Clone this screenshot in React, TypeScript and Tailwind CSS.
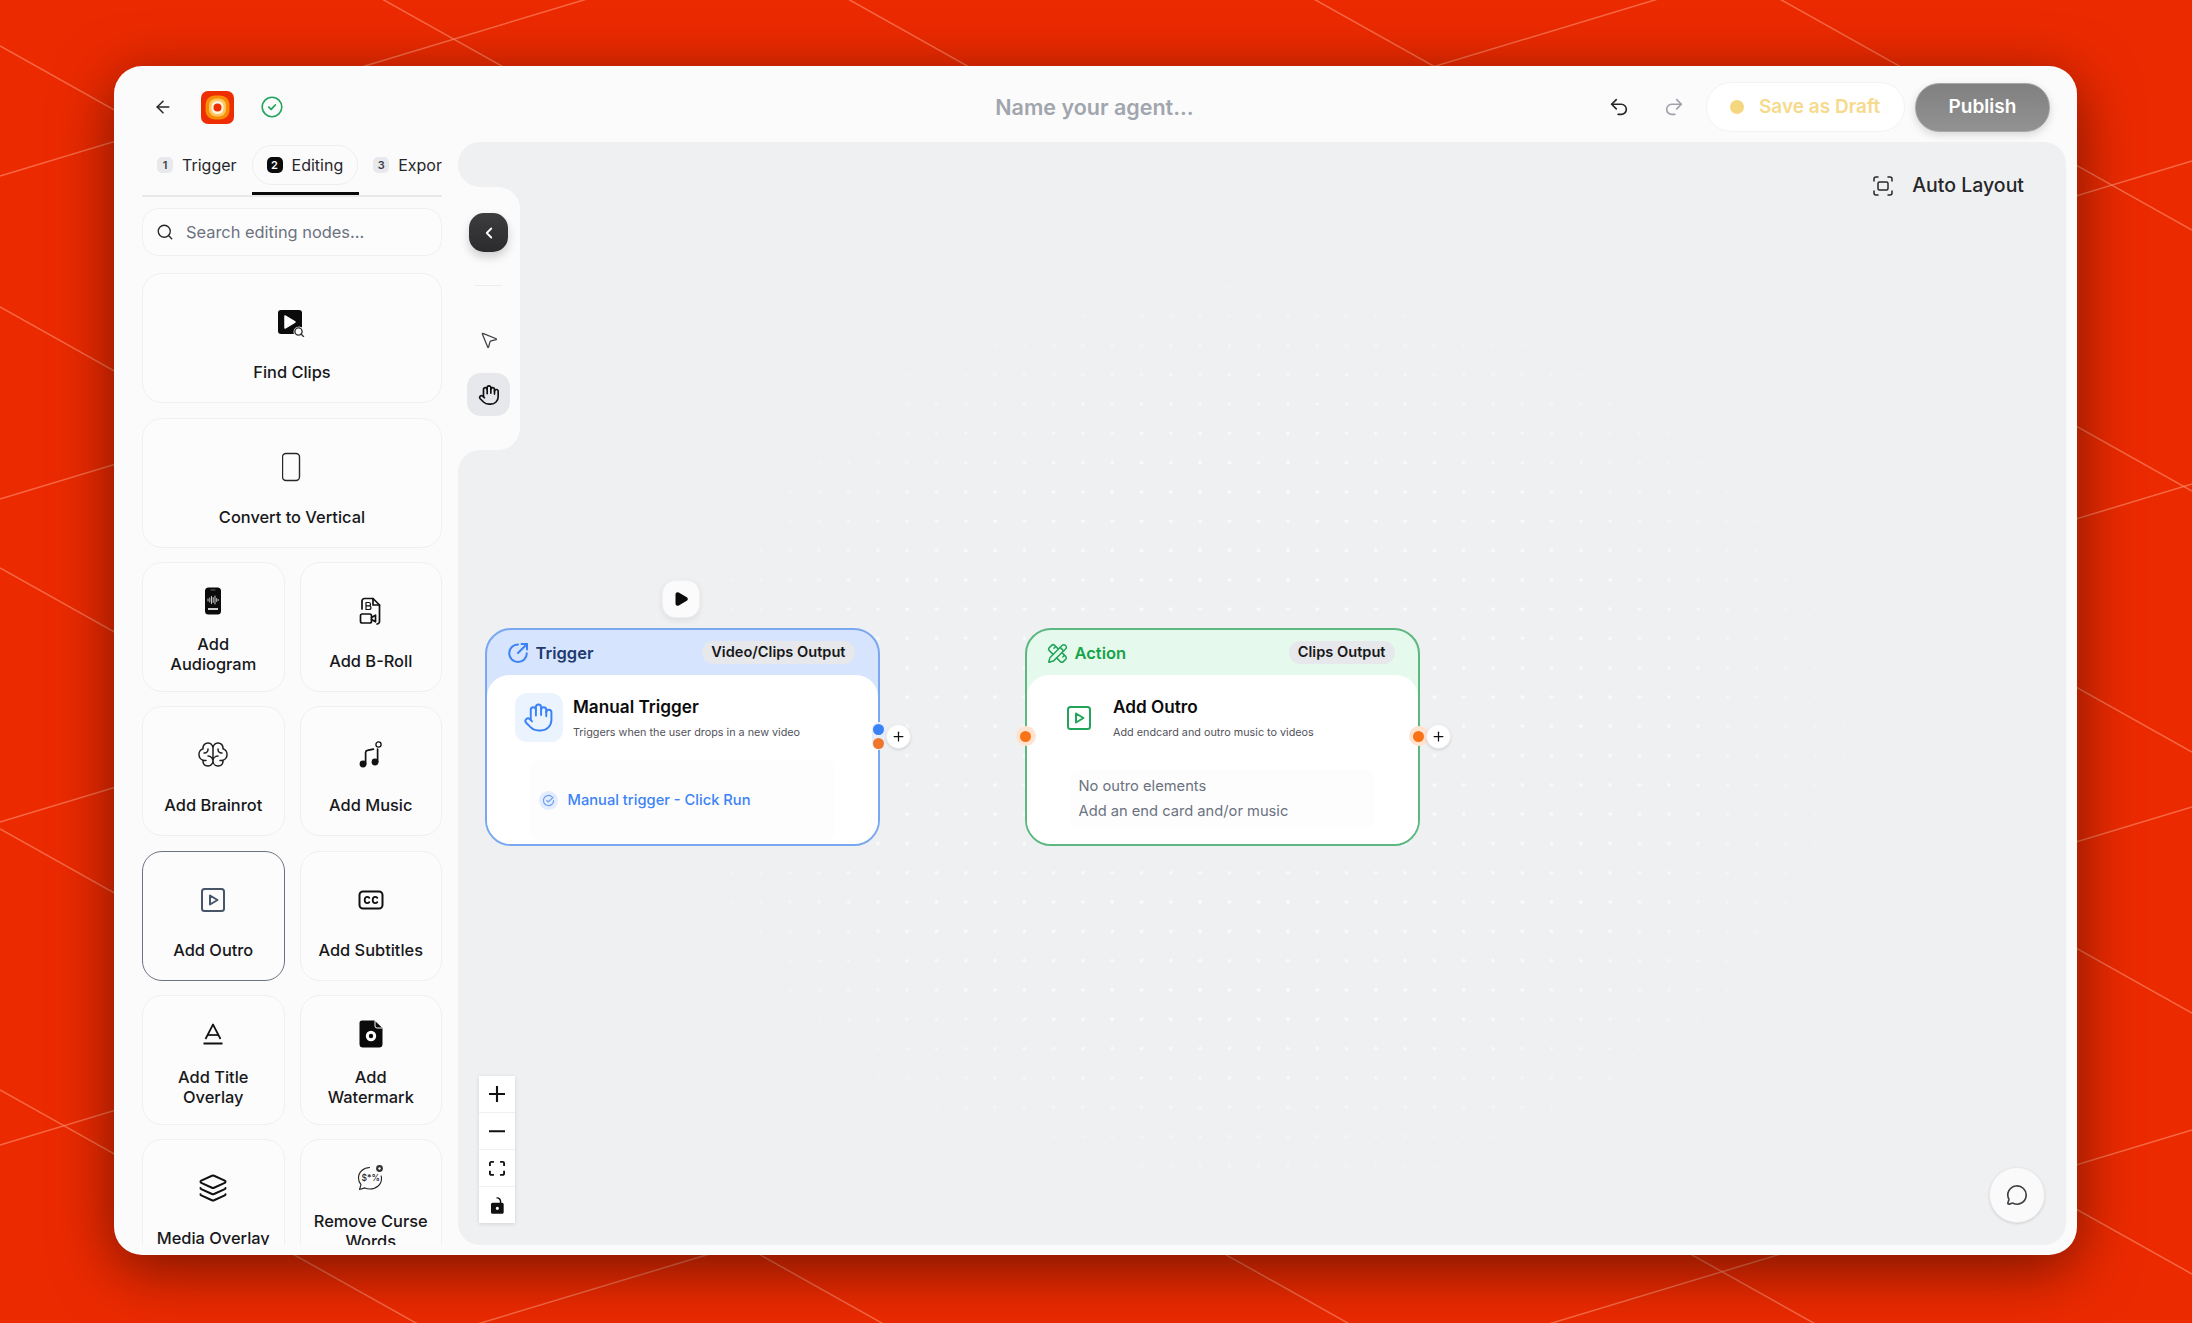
import React from "react";
import {
  ArrowLeft,
  ChevronLeft,
  Hand,
  Layers,
  MessageCircle,
  MousePointer2,
  PencilRuler,
  Play,
  Plus,
  Redo2,
  Search,
  Undo2,
} from "lucide-react";
import { PiBrainLight } from "react-icons/pi";

const FindClipsIcon = () => (
  <svg width="30" height="30" viewBox="2 -1 30 30">
    <rect x="3" y="2" width="24" height="24" rx="3" fill="#0b0b0c" />
    <path d="M10 8v12l10-6z" fill="#fff" stroke="#fff" strokeWidth="1.5" strokeLinejoin="round" />
    <circle cx="24" cy="24" r="5.5" fill="#fbfbfc" />
    <circle cx="23.5" cy="23.5" r="3.6" fill="none" stroke="#333" strokeWidth="1.4" />
    <path d="M26 26l2.5 2.5" stroke="#333" strokeWidth="1.4" strokeLinecap="round" />
  </svg>
);

const PhoneIcon = () => (
  <svg width="20" height="30" viewBox="1 0 20 30" fill="none" stroke="#27272a" strokeWidth="1.4">
    <rect x="1.5" y="1.5" width="17" height="27" rx="3.5" />
  </svg>
);

const AudiogramIcon = () => (
  <svg width="30" height="30" viewBox="0 0 30 30">
    <rect x="7" y="1.5" width="16" height="27" rx="3.5" fill="#0b0b0c" />
    <path d="M13 4h4" stroke="#666" strokeWidth="1" strokeLinecap="round" />
    <path
      d="M10 13v2M11.8 12v4M13.5 10.5v7M15.2 11.5v5M17 10v8M18.7 12.5v3M20.2 13.5v1"
      stroke="#ddd"
      strokeWidth="0.9"
      strokeLinecap="round"
    />
    <path d="M10 23h10" stroke="#fff" strokeWidth="1.6" />
  </svg>
);

const BRollIcon = () => (
  <svg width="30" height="30" viewBox="0 0 30 30" fill="none" stroke="#111" strokeWidth="1.7" strokeLinecap="round" strokeLinejoin="round">
    <path d="M6 13V5a2.5 2.5 0 012.5-2.5H17l6.5 6.5v16.5a2.5 2.5 0 01-2.5 2.5" />
    <path d="M17 2.5V9h6.5" />
    <path d="M10 6.5h2.8a1.6 1.6 0 010 3.4H10h3.2a1.7 1.7 0 010 3.6H10z" strokeWidth="1.2" />
    <rect x="4.5" y="18" width="11" height="9" rx="1.8" />
    <path d="M15.5 21.5l4-2.3v6.6l-4-2.3" />
  </svg>
);

const MusicIcon = () => (
  <svg width="30" height="30" viewBox="0 0 30 30" fill="none" stroke="#111" strokeWidth="1.7" strokeLinecap="round">
    <circle cx="7" cy="24" r="3.4" fill="#111" stroke="none" />
    <circle cx="19" cy="22" r="3.4" fill="#111" stroke="none" />
    <path d="M9.6 24V12.5c0-1.2.7-1.9 1.8-2.1l6-1.3" />
    <path d="M21.6 22V9" />
    <circle cx="22.5" cy="4.5" r="2.6" strokeWidth="1.3" />
  </svg>
);

const OutroIcon = ({ color, size = 24 }: { color: string; size?: number }) => (
  <svg width={size} height={size} viewBox="0 0 24 24" fill="none" stroke={color} strokeWidth="2" strokeLinejoin="round">
    <rect x="1" y="1" width="22" height="22" rx="2.5" />
    <path d="M9 7.5v9l7.5-4.5z" />
  </svg>
);

const CcIcon = () => (
  <svg width="26" height="20" viewBox="0 0 26 20" fill="none" stroke="#111" strokeWidth="2" strokeLinecap="round">
    <rect x="1.5" y="1.5" width="23" height="17" rx="3.5" />
    <path d="M11.3 7.8c-.6-.7-1.3-1-2-1-1.500 0-2.600 1.300-2.600 3.200s1.100 3.200 2.600 3.200c.7 0 1.400-.3 2-1" strokeWidth="1.8" />
    <path d="M19.300 7.800c-.6-.7-1.300-1-2-1-1.500 0-2.600 1.300-2.600 3.200s1.100 3.200 2.600 3.200c.7 0 1.400-.3 2-1" strokeWidth="1.8" />
  </svg>
);

const TitleIcon = () => (
  <svg width="24" height="24" viewBox="0 0 24 24" fill="none" stroke="#111" strokeWidth="1.7" strokeLinejoin="round">
    <path d="M4.5 17L12 2.5 19.5 17" />
    <path d="M6.8 13h10.4" />
    <path d="M2.500 21.500h19" strokeWidth="2" />
  </svg>
);

const WatermarkIcon = () => (
  <svg width="30" height="30" viewBox="0 0 30 30">
    <path d="M6 1.500h12.500L26.500 9v16a3.500 3.500 0 01-3.500 3.500H7A3.500 3.500 0 013.500 25V4A2.500 2.500 0 016 1.500z" fill="#0b0b0c" />
    <path d="M19 1.500v5.500a2 2 0 002 2h5.500" fill="none" stroke="#fbfbfc" strokeWidth="1" />
    <circle cx="15" cy="17" r="5.200" fill="#fff" />
    <circle cx="15" cy="17" r="2.200" fill="#0b0b0c" />
  </svg>
);

const CurseIcon = () => (
  <svg width="30" height="30" viewBox="0 0 30 30" fill="none" stroke="#222" strokeWidth="1.100">
    <path d="M14 4.500C7.500 4.500 2.500 9 2.500 15c0 2.600.9 4.900 2.500 6.700L3.500 26.500l5.300-1.600c1.600.7 3.300 1.100 5.200 1.100 6.500 0 11.500-4.500 11.500-10.500 0-1-.2-2-.4-2.900" strokeLinejoin="round" />
    <circle cx="23.500" cy="5.500" r="3.400" fill="#333" stroke="none" />
    <circle cx="23.500" cy="5.500" r="1.200" fill="#fff" stroke="none" />
    <text x="5.500" y="18" fontFamily="Inter, sans-serif" fontSize="8.500" fontWeight="500" fill="#222" stroke="none">
      $*%
    </text>
  </svg>
);

const TriggerIcon = () => (
  <svg width="22" height="22" viewBox="0 0 22 22" fill="none" stroke="#3b82f6" strokeWidth="2" strokeLinecap="round" strokeLinejoin="round">
    <path d="M11 2.500a8.800 8.800 0 108.800 8.800" />
    <path d="M11 11l9-9" />
    <path d="M14.500 2h5.500v5.500" />
  </svg>
);

const AutoLayoutIcon = () => (
  <svg width="22" height="22" viewBox="0 0 22 22" fill="none" stroke="#27272a" strokeWidth="1.500" strokeLinecap="round">
    <path d="M2 6V4a2 2 0 012-2h2M16 2h2a2 2 0 012 2v2M20 16v2a2 2 0 01-2 2h-2M6 20H4a2 2 0 01-2-2v-2" />
    <rect x="6" y="7" width="10" height="8" rx="1.500" />
  </svg>
);

const Logo = () => (
  <svg width="33" height="33" viewBox="0 0 33 33">
    <rect width="33" height="33" rx="7" fill="#ee2d02" />
    <rect x="4.500" y="4.500" width="24" height="24" rx="9" fill="#f98b06" />
    <rect x="8" y="7.500" width="17" height="18" rx="7" fill="#fdc65e" />
    <rect x="10.500" y="10" width="12" height="13" rx="5.500" fill="#fff5dc" />
    <circle cx="16.500" cy="16.500" r="4" fill="#ee2d02" />
  </svg>
);

const SavedIcon = () => (
  <svg width="22" height="22" viewBox="0 0 22 22" fill="none" stroke="#22a55b" strokeLinecap="round" strokeLinejoin="round">
    <circle cx="11" cy="11" r="9.800" strokeWidth="1.600" />
    <path d="M7.800 11.200l2.300 2.200 4.200-4.400" strokeWidth="1.800" />
  </svg>
);

const cards = [
  { label: "Add\nAudiogram", two: true, icon: <AudiogramIcon /> },
  { label: "Add B-Roll", two: false, icon: <BRollIcon /> },
  { label: "Add Brainrot", two: false, icon: <PiBrainLight size={32} color="#1f1f22" /> },
  { label: "Add Music", two: false, icon: <MusicIcon /> },
  { label: "Add Outro", two: false, selected: true, icon: <OutroIcon color="#475569" /> },
  { label: "Add Subtitles", two: false, icon: <CcIcon /> },
  { label: "Add Title\nOverlay", two: true, icon: <TitleIcon /> },
  { label: "Add\nWatermark", two: true, icon: <WatermarkIcon /> },
  { label: "Media Overlay", two: false, icon: <Layers size={30} strokeWidth={1.600} color="#111" /> },
  { label: "Remove Curse\nWords", two: true, icon: <CurseIcon /> },
];

const NodeCard = ({
  label,
  icon,
  two,
  selected,
}: {
  label: string;
  icon: React.ReactNode;
  two?: boolean;
  selected?: boolean;
}) => (
  <div
    className={`flex h-[130px] shrink-0 flex-col items-center rounded-[20px] border-[1.5px] bg-[#fcfcfc] text-center ${
      two ? "gap-[13px] pt-[18px]" : "gap-[20px] pt-[28px]"
    } ${selected ? "border-[#6b7280]" : "border-[#f0f0f2]"}`}
  >
    <div className="flex h-[40px] shrink-0 items-center justify-center">{icon}</div>
    <div className="text-[16.400px] leading-[20.300px] font-medium whitespace-pre-line text-[#18181b]">{label}</div>
  </div>
);

const Tab = ({ n, label, active }: { n: number; label: string; active?: boolean }) => (
  <div className={`flex h-[40px] shrink-0 items-center gap-[9px] rounded-[20px] ${active ? "border-[1.5px] border-[#eeeef0] px-[14px]" : "px-[15px]"}`}>
    <span
      className={`flex h-[16px] w-[16px] items-center justify-center rounded-[5px] text-[11px] font-semibold ${
        active ? "bg-[#0b0b0c] text-white" : "bg-[#e8e9ec] text-[#3f3f46]"
      }`}
    >
      {n}
    </span>
    <span className="text-[16px] text-[#27272a]">{label}</span>
  </div>
);

const Handle = ({ className }: { className: string }) => (
  <div className={`absolute flex h-[20px] w-[20px] items-center justify-center rounded-full bg-[#ffe2cf] ${className}`}>
    <div className="h-[11px] w-[11px] rounded-full bg-[#f97316]" />
  </div>
);

const AddButton = ({ className }: { className: string }) => (
  <div className={`absolute flex h-[25px] w-[25px] items-center justify-center rounded-full border border-[#eeeef0] bg-white shadow-sm ${className}`}>
    <Plus size={15} color="#111" strokeWidth={2} />
  </div>
);

const FlowNode = ({
  borderClass,
  headClass,
  icon,
  kind,
  kindClass,
  output,
  children,
  handles,
}: {
  borderClass: string;
  headClass: string;
  icon: React.ReactNode;
  kind: string;
  kindClass: string;
  output: string;
  children: React.ReactNode;
  handles: React.ReactNode;
}) => (
  <div className={`relative h-[218px] w-[395px] rounded-[26px] border-[2px] ${borderClass} ${headClass}`}>
    <div className="flex h-[45px] items-center justify-between pr-[23px] pl-[20px]">
      <div className="mt-[1px] flex items-center gap-[7px]">
        {icon}
        <span className={`text-[16.500px] font-semibold ${kindClass}`}>{kind}</span>
      </div>
      <span className="rounded-full bg-[#e6e8ec] px-[9px] text-[14.600px] leading-[23px] font-semibold text-[#18181b]">{output}</span>
    </div>
    <div className="h-[169px] rounded-t-[22px] rounded-b-[24px] bg-white pt-[18px] pr-[28px] pl-[28px]">{children}</div>
    {handles}
  </div>
);

const linesA = [-5, -4, -3, -2, -1, 0, 1, 2, 3, 4];
const linesB = [0, 1, 2, 3, 4, 5, 6];

const App = () => {
  return (
    <div className="relative h-[1323px] w-full overflow-hidden bg-[#ec2a00] pt-[66px] pl-[114px] font-['Inter',sans-serif]">
      <svg className="absolute inset-0" width="2192" height="1323" fill="none" stroke="#ff8a6b" strokeOpacity="0.65" strokeWidth="1.5">
        {linesA.map((k) => (
          <line key={`a${k}`} x1="0" y1={46 + 261 * k} x2="2192" y2={46 + 261 * k + 1228} />
        ))}
        {linesB.map((k) => (
          <line key={`b${k}`} x1="0" y1={176 + 323 * k} x2="2192" y2={176 + 323 * k - 661} />
        ))}
      </svg>

      <div className="relative flex h-[1189px] w-[1963px] flex-col rounded-[28px] bg-[#fbfbfc] shadow-[0_14px_60px_rgba(0,0,0,0.5)]">
        {/* top bar */}
        <div className="grid h-[76px] shrink-0 grid-cols-[1fr_auto_1fr] items-center pt-[6px] pr-[27px] pl-[39px]">
          <div className="flex items-center">
            <ArrowLeft size={20} color="#27272a" strokeWidth={1.800} />
            <div className="ml-[28px] flex">
              <Logo />
            </div>
            <div className="ml-[27px] flex">
              <SavedIcon />
            </div>
          </div>
          <div className="mr-[14px] text-[21.500px] font-semibold text-[#a1a5ad]">Name your agent...</div>
          <div className="flex items-center justify-end">
            <Undo2 size={22} color="#27272a" strokeWidth={1.800} />
            <Redo2 size={22} color="#a1a1aa" strokeWidth={1.800} className="ml-[33px]" />
            <div className="ml-[21px] flex h-[50px] w-[199px] items-center gap-[15px] rounded-full border border-[#f3f3f4] bg-white pl-[23px]">
              <div className="h-[14px] w-[14px] rounded-full bg-[#f5d77f]" />
              <span className="text-[19px] font-semibold text-[#f6da8c]">Save as Draft</span>
            </div>
            <div className="ml-[10px] flex h-[49px] w-[135px] items-center justify-center rounded-[24px] border border-[#a8a8a8] bg-[linear-gradient(180deg,#808080,#929292)] text-[19px] font-semibold text-white shadow-[0_3px_8px_rgba(0,0,0,0.15)]">
              Publish
            </div>
          </div>
        </div>

        <div className="flex min-h-0 flex-1 gap-[16px] pr-[11px] pb-[10px] pl-[28px]">
          {/* node library */}
          <div className="flex w-[300px] shrink-0 flex-col overflow-hidden">
            <div className="relative mt-[3px] flex h-[52px] shrink-0 items-start overflow-hidden border-b-[2px] border-[#e9e9ec]">
              <Tab n={1} label="Trigger" />
              <Tab n={2} label="Editing" active />
              <Tab n={3} label="Export" />
              <div className="absolute bottom-0 left-[110px] h-[3px] w-[107px] bg-[#0b0b0c]" />
            </div>
            <div className="mt-[11px] flex h-[48px] shrink-0 items-center gap-[12px] rounded-[16px] border-[1.5px] border-[#f0f0f2] bg-[#fcfcfc] pl-[13px]">
              <Search size={18} color="#27272a" strokeWidth={1.800} />
              <span className="text-[16.400px] text-[#6b7280]">Search editing nodes...</span>
            </div>
            <div className="mt-[17px] flex flex-col gap-[14.500px]">
              <NodeCard label="Find Clips" icon={<FindClipsIcon />} />
              <NodeCard label="Convert to Vertical" icon={<PhoneIcon />} />
              <div className="grid grid-cols-2 gap-x-[15px] gap-y-[14.300px]">
                {cards.map((c) => (
                  <NodeCard key={c.label} label={c.label} icon={c.icon} two={c.two} selected={c.selected} />
                ))}
              </div>
            </div>
          </div>

          {/* canvas */}
          <div className="relative min-w-0 flex-1 overflow-hidden rounded-[22px] bg-[#eff0f2]">
            <div className="absolute inset-0 bg-[radial-gradient(circle,#f8f9fa_1.6px,transparent_2px)] bg-[size:29.300px_29.300px] bg-[position:-5px_13px] [mask-image:radial-gradient(ellipse_640px_500px_at_800px_600px,black_60%,transparent_100%)]" />

            {/* side tools */}
            <div className="absolute top-[23px] left-0 h-[22px] w-[22px] bg-[#fbfbfc]">
              <div className="h-full w-full rounded-bl-[22px] bg-[#eff0f2]" />
            </div>
            <div className="absolute top-[45px] left-0 flex h-[263px] w-[62px] flex-col items-center rounded-r-[22px] bg-[#fbfbfc] pt-[26px] pr-[1px]">
              <div className="flex h-[39px] w-[39px] items-center justify-center rounded-[15px] bg-[linear-gradient(180deg,#3d3d3f,#2b2b2d)] shadow-[0_5px_10px_rgba(0,0,0,0.18)]">
                <ChevronLeft size={18} color="#fff" strokeWidth={2.400} />
              </div>
              <div className="mt-[33px] h-px w-[27px] bg-[#eeeef0]" />
              <MousePointer2 size={20} color="#3f3f46" strokeWidth={1.500} className="mt-[44px]" />
              <div className="mt-[23px] flex h-[43px] w-[43px] items-center justify-center rounded-[14px] bg-[#e7e8eb]">
                <Hand size={22} color="#111" strokeWidth={1.800} />
              </div>
            </div>
            <div className="absolute top-[308px] left-0 h-[22px] w-[22px] bg-[#fbfbfc]">
              <div className="h-full w-full rounded-tl-[22px] bg-[#eff0f2]" />
            </div>

            <div className="absolute top-[29px] right-[42px] flex items-center gap-[18px]">
              <AutoLayoutIcon />
              <span className="text-[19.500px] font-medium text-[#27272a]">Auto Layout</span>
            </div>

            {/* run button */}
            <div className="absolute top-[438px] left-[204px] flex h-[38px] w-[38px] items-center justify-center rounded-[13px] border border-[#f0f0f2] bg-[#fbfbfb] shadow-[0_2px_6px_rgba(0,0,0,0.08)]">
              <Play size={16} fill="#0b0b0c" color="#0b0b0c" strokeWidth={2.500} />
            </div>

            {/* trigger node */}
            <div className="absolute top-[486px] left-[26.500px]">
              <FlowNode
                borderClass="border-[#7aa8f0]"
                headClass="bg-[#d6e5fd]"
                icon={<TriggerIcon />}
                kind="Trigger"
                kindClass="text-[#1e3a6e]"
                output="Video/Clips Output"
                handles={
                  <>
                    <div className="absolute top-[92px] -right-[8px] flex h-[28px] w-[14px] flex-col items-center justify-between rounded-full bg-[#e8eef9] py-[1.500px]">
                      <div className="h-[11px] w-[11px] rounded-full bg-[#3b82f6]" />
                      <div className="h-[11px] w-[11px] rounded-full bg-[#f0762b]" />
                    </div>
                    <AddButton className="top-[94px] -right-[33px]" />
                  </>
                }
              >
                <div className="flex">
                  <div className="flex h-[49px] w-[48px] shrink-0 items-center justify-center rounded-[12px] bg-[#ebf3fe]">
                    <Hand size={31} color="#3b82f6" strokeWidth={1.500} />
                  </div>
                  <div className="ml-[10.500px]">
                    <div className="pt-[3px] text-[17.200px] leading-[22px] font-semibold text-[#0b0b0c]">Manual Trigger</div>
                    <div className="mt-[7px] text-[10.800px] leading-[15px] text-[#52525b]">Triggers when the user drops in a new video</div>
                  </div>
                </div>
                <div className="mt-[18px] ml-[15px] flex h-[80px] w-[305px] items-center gap-[10px] rounded-[10px] bg-[#fdfdfe] pl-[9px]">
                  <div className="flex h-[19px] w-[19px] items-center justify-center rounded-full bg-[#e4edfd]">
                    <svg width="13" height="13" viewBox="0 0 14 14" fill="none" stroke="#6ea0f5" strokeWidth="1.300" strokeLinecap="round" strokeLinejoin="round">
                      <path d="M12.500 7a5.500 5.500 0 11-2-4.200" />
                      <path d="M5 6.800l1.800 1.800L12 3.500" />
                    </svg>
                  </div>
                  <span className="text-[14.700px] font-medium text-[#3b82f6]">Manual trigger - Click Run</span>
                </div>
              </FlowNode>
            </div>

            {/* action node */}
            <div className="absolute top-[486px] left-[566.500px]">
              <FlowNode
                borderClass="border-[#5cb880]"
                headClass="bg-[#e5faec]"
                icon={<PencilRuler size={21} color="#22a55b" strokeWidth={1.700} />}
                kind="Action"
                kindClass="text-[#16a34a]"
                output="Clips Output"
                handles={
                  <>
                    <Handle className="top-[96px] -left-[11px]" />
                    <Handle className="top-[96px] -right-[11px]" />
                    <AddButton className="top-[94px] -right-[33px]" />
                  </>
                }
              >
                <div className="flex">
                  <div className="flex h-[49px] w-[48px] shrink-0 items-center justify-center">
                    <OutroIcon color="#22a55b" size={24} />
                  </div>
                  <div className="ml-[10.500px]">
                    <div className="pt-[3px] text-[17.200px] leading-[22px] font-semibold text-[#0b0b0c]">Add Outro</div>
                    <div className="mt-[7px] text-[10.800px] leading-[15px] text-[#52525b]">Add endcard and outro music to videos</div>
                  </div>
                </div>
                <div className="mt-[28px] ml-[15px] flex h-[58px] w-[305px] flex-col justify-center gap-[4px] rounded-[10px] bg-[#fdfdfe] pl-[9px] text-[14.700px] leading-[21px] text-[#6b7280]">
                  <div>No outro elements</div>
                  <div>Add an end card and/or music</div>
                </div>
              </FlowNode>
            </div>

            {/* zoom controls */}
            <div className="absolute top-[934px] left-[21px] flex w-[36px] flex-col bg-white shadow-[0_1px_4px_rgba(0,0,0,0.12)]">
              <div className="flex h-[37px] items-center justify-center border-b border-[#f0f0f2]">
                <svg width="16" height="16" viewBox="0 0 32 32" fill="#111">
                  <path d="M32 18.133H18.133V32h-4.266V18.133H0v-4.266h13.867V0h4.266v13.867H32z" />
                </svg>
              </div>
              <div className="flex h-[37px] items-center justify-center border-b border-[#f0f0f2]">
                <svg width="16" height="3" viewBox="0 0 32 5" fill="#111">
                  <path d="M0 0h32v4.200H0z" />
                </svg>
              </div>
              <div className="flex h-[37px] items-center justify-center border-b border-[#f0f0f2]">
                <svg width="16" height="15" viewBox="0 0 32 30" fill="#111">
                  <path d="M3.692 4.630c0-.530.400-.938.939-.938h5.215V0H4.708C2.130 0 0 2.054 0 4.630v5.216h3.692V4.631zM27.354 0h-5.200v3.692h5.170c.530 0 .984.400.984.939v5.215H32V4.631A4.624 4.624 0 0027.354 0zm.954 24.830c0 .532-.400.940-.939.940h-5.215v3.768h5.215c2.577 0 4.631-2.130 4.631-4.707v-5.139h-3.692v5.139zm-23.677.940c-.531 0-.939-.400-.939-.940v-5.138H0v5.139c0 2.577 2.130 4.707 4.708 4.707h5.138V25.770H4.631z" />
                </svg>
              </div>
              <div className="flex h-[36px] items-center justify-center">
                <svg width="13" height="17" viewBox="0 0 25 32" fill="#111">
                  <path d="M21.333 10.667H19.810V7.619C19.810 3.429 16.380 0 12.190 0c-4.114 1.828-1.370 2.133.305 2.438 1.676.305 4.420 2.590 4.420 5.181v3.048H3.047A3.056 3.056 0 000 13.714v15.238A3.056 3.056 0 003.048 32h18.285a3.056 3.056 0 003.048-3.048V13.714a3.056 3.056 0 00-3.048-3.047zM12.190 24.533a3.056 3.056 0 01-3.047-3.047 3.056 3.056 0 013.047-3.048 3.056 3.056 0 013.048 3.048 3.056 3.056 0 01-3.048 3.047z" />
                </svg>
              </div>
            </div>

            {/* chat */}
            <div className="absolute right-[21px] bottom-[22px] flex h-[56px] w-[56px] items-center justify-center rounded-full border border-[#e9e9ec] bg-[#fafafa] shadow-sm">
              <MessageCircle size={22} color="#3f3f46" strokeWidth={1.800} />
            </div>
          </div>
        </div>
      </div>
    </div>
  );
};

export default App;
